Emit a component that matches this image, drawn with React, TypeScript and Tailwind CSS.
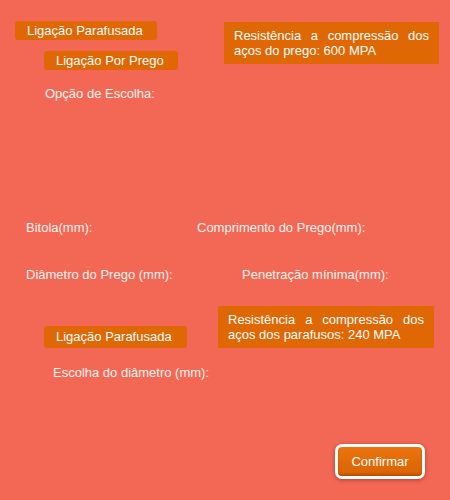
import React from 'react';

const font = { fontFamily: '"Liberation Sans", Arial, sans-serif' };

const Badge = ({ label, className }: any) => (
  <div className={`h-[19px] bg-[#df6704] rounded-[3px] text-white text-[13px] leading-[19px] pl-[12px] ${className}`}>
    {label}
  </div>
);

const InfoBox = ({ lines, className }: any) => (
  <div className={`bg-[#df6704] text-white text-[13px] leading-[15px] px-[10px] py-[6px] text-justify ${className}`}>
    {lines}
  </div>
);

const Label = ({ text, className }: any) => (
  <div className={`text-[13px] leading-[15px] text-[#fff3f0] ${className}`}>{text}</div>
);

export default function App() {
  return (
    <div className="w-[450px] h-[500px] bg-[#f26855] flex flex-col" style={font}>
      {/* Prego section */}
      <div className="flex pt-[21px]">
        <div className="w-[224px] flex flex-col">
          <Badge label="Ligação Parafusada" className="ml-[15px] w-[142px]" />
          <Badge label="Ligação Por Prego" className="ml-[44px] mt-[11px] w-[134px]" />
          <Label text="Opção de Escolha:" className="ml-[45px] mt-[16px]" />
        </div>
        <InfoBox
          className="w-[215px] h-[42px] mt-[1px]"
          lines="Resistência a compressão dos aços do prego: 600 MPA"
        />
      </div>

      <div className="flex mt-[119px]">
        <Label text="Bitola(mm):" className="ml-[26px] w-[171px]" />
        <Label text="Comprimento do Prego(mm):" />
      </div>

      <div className="flex mt-[32px]">
        <Label text="Diâmetro do Prego (mm):" className="ml-[26px] w-[216px]" />
        <Label text="Penetração mínima(mm):" />
      </div>

      {/* Parafuso section */}
      <div className="flex mt-[24px]">
        <div className="w-[218px] flex flex-col">
          <Badge label="Ligação Parafusada" className="ml-[44px] mt-[20px] w-[143px] h-[22px] leading-[22px] pl-[10px]" />
        </div>
        <InfoBox
          className="w-[216px] h-[42px]"
          lines="Resistência a compressão dos aços dos parafusos: 240 MPA"
        />
      </div>

      <Label text="Escolha do diâmetro (mm):" className="ml-[53px] mt-[17px]" />

      <div className="flex justify-end pr-[25px] mt-auto mb-[21px]">
        <div className="w-[90px] h-[35px] border-[3px] border-white rounded-[7px] bg-white shadow-[0_1px_4px_rgba(120,20,10,0.5)]">
          <button className="w-full h-full rounded-[4px] bg-gradient-to-b from-[#ec7410] to-[#d86300] text-white text-[13px] shadow-[inset_0_-2px_2px_rgba(120,40,0,0.35)]">
            Confirmar
          </button>
        </div>
      </div>
    </div>
  );
}
